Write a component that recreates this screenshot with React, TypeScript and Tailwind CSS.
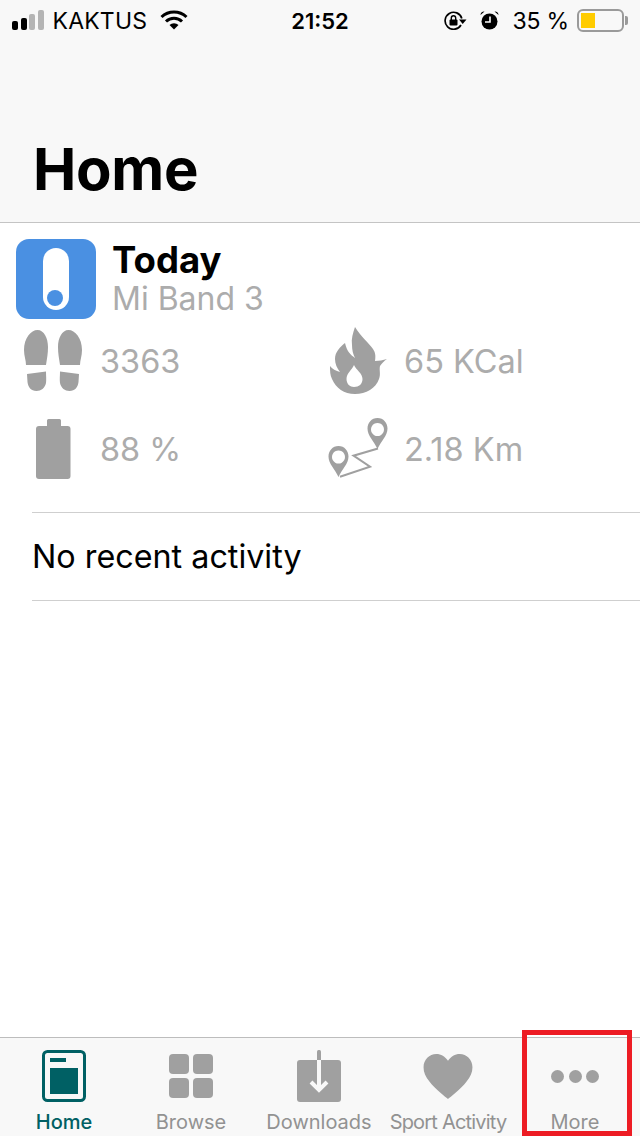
const font = "font-['Inter','Liberation_Sans',sans-serif]";

function Signal() {
  return (
    <div className="-mt-[2px] flex h-[20px] items-end gap-[2.5px]">
      <div className="h-[9px] w-[6px] rounded-[2px] bg-black" />
      <div className="h-[12px] w-[6px] rounded-[2px] bg-black" />
      <div className="h-[16px] w-[6px] rounded-[2px] bg-[#b4b4b4]" />
      <div className="h-[20px] w-[6px] rounded-[2px] bg-[#b4b4b4]" />
    </div>
  );
}

function Wifi() {
  return (
    <svg width="28" height="20" viewBox="0 0 28 20">
      <path d="M1.500 7 A18 18 0 0 1 26.500 7" fill="none" stroke="#000" strokeWidth="3" />
      <path d="M6 11.500 A11.500 11.500 0 0 1 22 11.500" fill="none" stroke="#000" strokeWidth="3" />
      <path d="M9.500 15 L14 19.500 L18.500 15 A6.500 6.500 0 0 0 9.500 15 Z" fill="#000" />
    </svg>
  );
}

function RotationLock() {
  return (
    <svg width="23" height="19" viewBox="0 0 23 19">
      <path d="M17 14 A8.500 8.500 0 1 1 17.800 7.500" fill="none" stroke="#000" strokeWidth="1.700" />
      <path d="M15 8.500 H22.500 L18.700 13 Z" fill="#000" />
      <rect x="5.500" y="8.500" width="8" height="6" rx="1" fill="#000" />
      <path d="M7.300 9 V7 A2.200 2.200 0 0 1 11.700 7 V9" fill="none" stroke="#000" strokeWidth="1.400" />
    </svg>
  );
}

function Alarm() {
  return (
    <svg width="19" height="19" viewBox="0 0 19 19">
      <circle cx="9.500" cy="10.500" r="8" fill="#000" />
      <path d="M0.500 4 A3.500 3.500 0 0 1 4.500 0.500 Z M18.500 4 A3.500 3.500 0 0 0 14.500 0.500 Z" fill="#000" />
      <path d="M10 5.500 V11 H5" fill="none" stroke="#fff" strokeWidth="1.600" />
    </svg>
  );
}

function StatusBar() {
  return (
    <div className="relative flex h-[42px] items-center pl-[12px] pr-[12px] text-[23px] text-black">
      <Signal />
      <span className="ml-[9px] tracking-[0.2px]">KAKTUS</span>
      <div className="-mt-[2px] ml-[13px]">
        <Wifi />
      </div>
      <span className="absolute left-0 right-0 top-[7px] text-center text-[22px] font-semibold leading-[28px]">21:52</span>
      <div className="ml-auto flex items-center">
        <div className="-mt-[2px] flex items-center">
          <RotationLock />
        </div>
        <div className="-mt-[2px] ml-[13px]">
          <Alarm />
        </div>
        <span className="ml-[14px] tracking-[-0.2px]">35 %</span>
        <div className="-mt-[1px] ml-[8px] flex items-center">
          <div className="h-[23px] w-[47px] rounded-[6px] border-2 border-[#9a9a9a] p-[2px]">
            <div className="h-full w-[14px] bg-[#ffcc00]" />
          </div>
          <div className="ml-[1px] h-[9px] w-[3px] rounded-r-[2px] bg-[#9a9a9a]" />
        </div>
      </div>
    </div>
  );
}

function Steps() {
  return (
    <svg width="60" height="62" viewBox="0 0 60 62">
      <path d="M14.500 0 C8 0 1 8 1 20 C1 26 3 30 3 35 H23 C24 28 25 24 25 17 C25 8 21 0 14.500 0 Z" fill="#a0a0a0" />
      <path d="M4 44 L23 41.500 C23 46 23.500 49 23 53 C22 58 18 61 13.500 61 C8 61 5 57 4.500 52 Z" fill="#a0a0a0" />
      <path d="M45.500 0 C52 0 59 8 59 20 C59 26 57 30 57 35 H37 C36 28 35 24 35 17 C35 8 39 0 45.500 0 Z" fill="#a0a0a0" />
      <path d="M56 44 L37 41.500 C37 46 36.500 49 37 53 C38 58 42 61 46.500 61 C52 61 55 57 55.500 52 Z" fill="#a0a0a0" />
    </svg>
  );
}

function BatteryIcon() {
  return (
    <svg width="36" height="60" viewBox="0 0 36 60">
      <path d="M11 1.500 A1.500 1.500 0 0 1 12.500 0 H23.500 A1.500 1.500 0 0 1 25 1.500 V7 H11 Z" fill="#a0a0a0" />
      <rect x="0" y="7" width="34.500" height="53" rx="3" fill="#a0a0a0" />
    </svg>
  );
}

function Flame() {
  return (
    <svg width="60" height="67" viewBox="0 0 60 67">
      <path
        fillRule="evenodd"
        fill="#a0a0a0"
        d="M27 0 C25 6 23 12 24 18 C24 23 25 27 27 31 C23 28 19 25 17 16 C12 20 7 25 7 32 C7 37 9 41 12 45 C8 44 4 42 2 39 C2 44 2 48 4 52 C8 61 16 67 27 67 C38 67 48 61 51 52 C53 47 51 43 52 39 C54 36 56 34 59 32 C55 33 51 34 47 34 C48 28 47 25 45 22 C41 16 33 10 27 0 Z M26 38 C24 43 18.500 46 18.500 52 C18.500 57 22 60 26 60 C31 60 34.500 57 34.500 52 C34.500 46 28 43 26 38 Z"
      />
    </svg>
  );
}

function Route() {
  return (
    <svg width="62" height="62" viewBox="0 0 62 62">
      <path fillRule="evenodd" fill="#a0a0a0" d="M49.500 0 C43.500 0 39.500 5 39.500 10.500 C39.500 18 46 23 49.500 31 C53 23 59.500 18 59.500 10.500 C59.500 5 55.500 0 49.500 0 Z M49.500 5 A6.500 6.500 0 1 1 49.490 5 Z" />
      <path fillRule="evenodd" fill="#a0a0a0" d="M10.500 28 C4.500 28 0.500 33 0.500 38.500 C0.500 46 7 51 10.500 59 C14 51 20.500 46 20.500 38.500 C20.500 33 16.500 28 10.500 28 Z M10.500 32.500 A6.500 6.500 0 1 1 10.490 32.500 Z" />
      <path d="M50 30.500 L25.500 37.700 L42 48.700 L12 58.700" fill="none" stroke="#a0a0a0" strokeWidth="2" />
    </svg>
  );
}

function Stat({ icon, label, iconClass }: { icon: React.ReactNode; label: string; iconClass?: string }) {
  return (
    <div className="flex w-[304px] items-center">
      <div className={`flex w-[77px] shrink-0 -translate-y-px ${iconClass ?? ""}`}>{icon}</div>
      <span className="text-[32.5px] leading-[40px] text-[#acacac]">{label}</span>
    </div>
  );
}

function HomeIcon() {
  return (
    <svg width="44" height="52" viewBox="0 0 44 52">
      <rect x="1.500" y="1.500" width="41" height="49" rx="4" fill="none" stroke="#006064" strokeWidth="3" />
      <rect x="8" y="8" width="16" height="4" fill="#006064" />
      <rect x="8" y="18" width="28" height="26" fill="#006064" />
    </svg>
  );
}

function BrowseIcon() {
  return (
    <div className="grid grid-cols-2 gap-[4px]">
      <div className="size-[20px] rounded-[4px] bg-[#a0a0a0]" />
      <div className="size-[20px] rounded-[4px] bg-[#a0a0a0]" />
      <div className="size-[20px] rounded-[4px] bg-[#a0a0a0]" />
      <div className="size-[20px] rounded-[4px] bg-[#a0a0a0]" />
    </div>
  );
}

function DownloadIcon() {
  return (
    <svg width="44" height="52" viewBox="0 0 44 52">
      <rect x="0" y="10" width="44" height="42" rx="3" fill="#a0a0a0" />
      <rect x="20" y="0" width="4" height="11" rx="1.500" fill="#a0a0a0" />
      <path d="M22 10 V40 M14 32 L22 40 L30 32" fill="none" stroke="#f8f8f8" strokeWidth="4" />
    </svg>
  );
}

function HeartIcon() {
  return (
    <svg width="50" height="45" viewBox="0 0 50 46">
      <path d="M25 46 C23 44 12 36 6 28 C2 23 0 19 0 13.500 C0 6 6 0 13 0 C18 0 22 2.500 25 7 C28 2.500 32 0 37 0 C44 0 50 6 50 13.500 C50 19 48 23 44 28 C38 36 27 44 25 46 Z" fill="#a0a0a0" />
    </svg>
  );
}

function MoreIcon() {
  return (
    <div className="flex gap-[4.500px]">
      <div className="size-[13px] rounded-full bg-[#a0a0a0]" />
      <div className="size-[13px] rounded-full bg-[#a0a0a0]" />
      <div className="size-[13px] rounded-full bg-[#a0a0a0]" />
    </div>
  );
}

function Tab({ icon, label, active, className }: { icon: React.ReactNode; label: string; active?: boolean; className?: string }) {
  return (
    <div className={`flex w-[128px] flex-col items-center pt-[5px] ${className ?? ""}`}>
      <div className="flex h-[66px] items-center justify-center">{icon}</div>
      <span className={`whitespace-nowrap text-[20px] leading-[26px] ${active ? "font-medium text-[#006064]" : "text-[#929292]"}`}>{label}</span>
    </div>
  );
}

export default function App() {
  return (
    <div className={`flex h-[1136px] w-[640px] flex-col overflow-hidden bg-white ${font}`}>
      <header className="h-[223px] shrink-0 border-b border-[#c4c4c4] bg-[#f8f8f8]">
        <StatusBar />
        <h1 className="mt-[90px] pl-[33px] text-[58px] font-bold leading-[74px] tracking-[-0.3px] text-black">Home</h1>
      </header>

      <main className="flex-1">
        <div className="flex pl-[16px] pt-[16px]">
          <div className="flex size-[80px] items-center justify-center rounded-[13px] bg-[#4a90e2]">
            <div className="flex h-[62px] w-[26px] flex-col justify-end rounded-full bg-white p-[4px]">
              <div className="size-[16px] rounded-full bg-[#4a90e2]" />
            </div>
          </div>
          <div className="ml-[16px]">
            <div className="text-[36.5px] font-bold leading-[42px] text-black">Today</div>
            <div className="text-[32px] leading-[36px] text-[#acacac]">Mi Band 3</div>
          </div>
        </div>

        <div className="mt-[9px] flex pl-[23px]">
          <Stat icon={<Steps />} label="3363" />
          <Stat icon={<Flame />} label="65 KCal" iconClass="ml-[1px] -mr-[1px]" />
        </div>
        <div className="mt-[24px] flex pl-[23px]">
          <Stat icon={<BatteryIcon />} label="88 %" iconClass="pl-[13px]" />
          <Stat icon={<Route />} label="2.18 Km" iconClass="ml-[1px] -mr-[1px]" />
        </div>

        <div className="ml-[32px] mt-[31px] border-y border-[#cfcfcf] pb-[20px] pt-[21px] text-[32.3px] leading-[46px] text-black">
          No recent activity
        </div>
      </main>

      <nav className="relative flex h-[99px] shrink-0 border-t border-[#bdbdbd] bg-[#f8f8f8]">
        <Tab icon={<HomeIcon />} label="Home" active />
        <Tab icon={<BrowseIcon />} label="Browse" className="pr-[2px]" />
        <Tab icon={<DownloadIcon />} label="Downloads" className="pr-[2px]" />
        <Tab icon={<HeartIcon />} label="Sport Activity" className="tracking-[-0.8px]" />
        <Tab icon={<MoreIcon />} label="More" className="pr-[2px]" />
        <div className="absolute bottom-0 left-[522px] top-[-8px] w-[110px] border-[5px] border-[#ed1c24]" />
      </nav>
    </div>
  );
}
